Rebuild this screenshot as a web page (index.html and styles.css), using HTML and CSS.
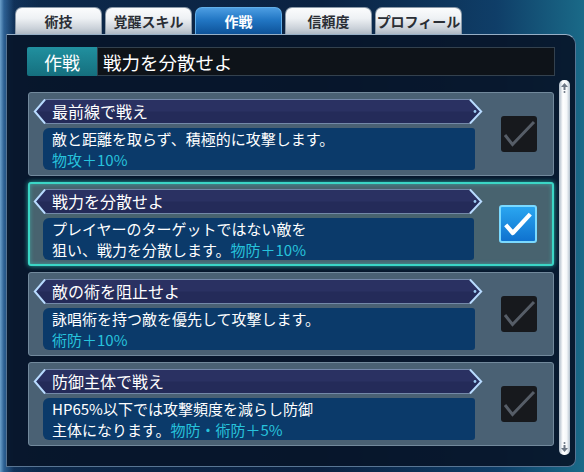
FILE: index.html
```html
<!DOCTYPE html>
<html lang="ja">
<head>
<meta charset="utf-8">
<title>作戦</title>
<link rel="stylesheet" href="styles.css">
</head>
<body>
<div class="screen">
  <nav class="tabs">
    <div class="tab">術技</div>
    <div class="tab">覚醒スキル</div>
    <div class="tab active">作戦</div>
    <div class="tab">信頼度</div>
    <div class="tab">プロフィール</div>
  </nav>
  <section class="panel">
    <header class="current">
      <div class="current-label">作戦</div>
      <div class="current-value">戦力を分散せよ</div>
    </header>
    <div class="panel-body">
      <ul class="tactics">
        <li class="tactic">
          <div class="tactic-main">
            <div class="ribbon">
              <svg class="ribbon-bg" viewBox="0 0 450 25" width="450" height="25"><polygon points="11,0.5 438,0.5 449,12.5 438,24.5 11,24.5 1,12.5" fill="#242b59"/><polygon points="11,0.5 438,0.5 449,12.5 1,12.5" fill="#2e3669" opacity="0.6"/><line x1="11" y1="0.5" x2="438" y2="0.5" stroke="#8ea6c6" stroke-width="1" opacity="0.7"/><line x1="11" y1="24.5" x2="438" y2="24.5" stroke="#8ea6c6" stroke-width="1" opacity="0.7"/><polyline points="12,0.5 1.8,12.5 12,24.5" fill="none" stroke="#b9dcff" stroke-width="2"/><polyline points="437,0.5 448.2,12.5 437,24.5" fill="none" stroke="#b9dcff" stroke-width="2"/><circle cx="442" cy="12.5" r="1.4" fill="#9ccaf0"/></svg>
              <span class="ribbon-title">最前線で戦え</span>
            </div>
            <p class="desc">敵と距離を取らず、積極的に攻撃します。<br><span class="bonus">物攻＋10%</span></p>
          </div>
          <div class="check"><svg viewBox="0 0 36 36" width="36" height="36"><polyline points="4,19 11.5,28.5 33,6" fill="none" stroke="#565d67" stroke-width="3"/></svg></div>
        </li>
        <li class="tactic selected">
          <div class="tactic-main">
            <div class="ribbon">
              <svg class="ribbon-bg" viewBox="0 0 450 25" width="450" height="25"><polygon points="11,0.5 438,0.5 449,12.5 438,24.5 11,24.5 1,12.5" fill="#242b59"/><polygon points="11,0.5 438,0.5 449,12.5 1,12.5" fill="#2e3669" opacity="0.6"/><line x1="11" y1="0.5" x2="438" y2="0.5" stroke="#8ea6c6" stroke-width="1" opacity="0.7"/><line x1="11" y1="24.5" x2="438" y2="24.5" stroke="#8ea6c6" stroke-width="1" opacity="0.7"/><polyline points="12,0.5 1.8,12.5 12,24.5" fill="none" stroke="#b9dcff" stroke-width="2"/><polyline points="437,0.5 448.2,12.5 437,24.5" fill="none" stroke="#b9dcff" stroke-width="2"/><circle cx="442" cy="12.5" r="1.4" fill="#9ccaf0"/></svg>
              <span class="ribbon-title">戦力を分散せよ</span>
            </div>
            <p class="desc">プレイヤーのターゲットではない敵を<br>狙い、戦力を分散します。<span class="bonus">物防＋10%</span></p>
          </div>
          <div class="check checked"><svg viewBox="0 0 36 36" width="36" height="36"><polyline points="5,19 12.5,27.5 31,7.5" fill="none" stroke="#ffffff" stroke-width="4.5" stroke-linejoin="round"/></svg></div>
        </li>
        <li class="tactic">
          <div class="tactic-main">
            <div class="ribbon">
              <svg class="ribbon-bg" viewBox="0 0 450 25" width="450" height="25"><polygon points="11,0.5 438,0.5 449,12.5 438,24.5 11,24.5 1,12.5" fill="#242b59"/><polygon points="11,0.5 438,0.5 449,12.5 1,12.5" fill="#2e3669" opacity="0.6"/><line x1="11" y1="0.5" x2="438" y2="0.5" stroke="#8ea6c6" stroke-width="1" opacity="0.7"/><line x1="11" y1="24.5" x2="438" y2="24.5" stroke="#8ea6c6" stroke-width="1" opacity="0.7"/><polyline points="12,0.5 1.8,12.5 12,24.5" fill="none" stroke="#b9dcff" stroke-width="2"/><polyline points="437,0.5 448.2,12.5 437,24.5" fill="none" stroke="#b9dcff" stroke-width="2"/><circle cx="442" cy="12.5" r="1.4" fill="#9ccaf0"/></svg>
              <span class="ribbon-title">敵の術を阻止せよ</span>
            </div>
            <p class="desc">詠唱術を持つ敵を優先して攻撃します。<br><span class="bonus">術防＋10%</span></p>
          </div>
          <div class="check"><svg viewBox="0 0 36 36" width="36" height="36"><polyline points="4,19 11.5,28.5 33,6" fill="none" stroke="#565d67" stroke-width="3"/></svg></div>
        </li>
        <li class="tactic">
          <div class="tactic-main">
            <div class="ribbon">
              <svg class="ribbon-bg" viewBox="0 0 450 25" width="450" height="25"><polygon points="11,0.5 438,0.5 449,12.5 438,24.5 11,24.5 1,12.5" fill="#242b59"/><polygon points="11,0.5 438,0.5 449,12.5 1,12.5" fill="#2e3669" opacity="0.6"/><line x1="11" y1="0.5" x2="438" y2="0.5" stroke="#8ea6c6" stroke-width="1" opacity="0.7"/><line x1="11" y1="24.5" x2="438" y2="24.5" stroke="#8ea6c6" stroke-width="1" opacity="0.7"/><polyline points="12,0.5 1.8,12.5 12,24.5" fill="none" stroke="#b9dcff" stroke-width="2"/><polyline points="437,0.5 448.2,12.5 437,24.5" fill="none" stroke="#b9dcff" stroke-width="2"/><circle cx="442" cy="12.5" r="1.4" fill="#9ccaf0"/></svg>
              <span class="ribbon-title">防御主体で戦え</span>
            </div>
            <p class="desc">HP65%以下では攻撃頻度を減らし防御<br>主体になります。<span class="bonus">物防・術防＋5%</span></p>
          </div>
          <div class="check"><svg viewBox="0 0 36 36" width="36" height="36"><polyline points="4,19 11.5,28.5 33,6" fill="none" stroke="#565d67" stroke-width="3"/></svg></div>
        </li>
      </ul>
      <div class="scrollbar">
        <svg class="scroll-arrow" viewBox="0 0 7 10" width="7" height="10"><polygon points="3.5,0 7,4 0,4" fill="#6c7784"/><rect x="2.5" y="4" width="2" height="3" fill="#6c7784"/><circle cx="3.5" cy="9" r="1" fill="#6c7784"/></svg>
        <svg class="scroll-arrow" viewBox="0 0 7 10" width="7" height="10"><circle cx="3.5" cy="1" r="1" fill="#6c7784"/><rect x="2.5" y="3" width="2" height="3" fill="#6c7784"/><polygon points="3.5,10 7,6 0,6" fill="#6c7784"/></svg>
      </div>
    </div>
  </section>
</div>
</body>
</html>
```

FILE: styles.css
```css
html, body {
  margin: 0;
  padding: 0;
}

body {
  width: 584px;
  height: 472px;
  overflow: hidden;
  font-family: "Noto Sans CJK JP", "Noto Sans", sans-serif;
  background:
    linear-gradient(90deg, rgba(140, 200, 245, 0.75) 0, rgba(70, 140, 205, 0.55) 4px, rgba(30, 80, 140, 0.2) 14px, rgba(20, 60, 110, 0) 40px),
    linear-gradient(90deg, #0d2a4c 0, #0b2242 55%, #0f3e68 85%, #1a6a88 100%);
}

.screen {
  width: 584px;
  height: 472px;
}

.tabs {
  display: flex;
  gap: 3px;
  padding: 7px 0 0 15px;
  height: 27px;
}

.tab {
  width: 87px;
  height: 27px;
  box-sizing: border-box;
  border: 1px solid #8b99a8;
  border-bottom: none;
  border-radius: 7px 7px 0 0;
  background: linear-gradient(#fbfcfd 0, #eef1f4 40%, #c9d0d8 80%, #aeb8c3 100%);
  color: #2a2e35;
  font-size: 14px;
  font-weight: 700;
  display: flex;
  align-items: center;
  justify-content: center;
}

.tab.active {
  background: linear-gradient(#4c9de2 0, #2277c4 45%, #0d5299 100%);
  border-color: #62aee8;
  color: #ffffff;
}

.panel {
  margin: 0 8px 0 6px;
  height: 433px;
  box-sizing: border-box;
  border: 1px solid #587593;
  border-top-color: #97afc6;
  border-radius: 0 10px 8px 0;
  background: rgba(8, 22, 42, 0.93);
  padding: 12px 5px 0 20px;
}

.current {
  display: flex;
  width: 528px;
  height: 29px;
}

.current-label {
  width: 70px;
  background: linear-gradient(#21909f, #156f7e);
  color: #ffffff;
  font-size: 18px;
  display: flex;
  align-items: center;
  justify-content: center;
  border-radius: 2px 0 0 2px;
}

.current-value {
  flex: 1;
  box-sizing: border-box;
  background: #0e1319;
  border: 1px solid #33414e;
  color: #ffffff;
  font-size: 18.5px;
  padding-left: 5px;
  display: flex;
  align-items: center;
}

.panel-body {
  display: flex;
  gap: 5px;
  margin-top: 4px;
}

.tactics {
  list-style: none;
  margin: 0;
  padding: 12px 0 0 1px;
  width: 526px;
  display: flex;
  flex-direction: column;
  gap: 6px;
}

.tactic {
  height: 84px;
  box-sizing: border-box;
  background: #4a6174;
  border: 1px solid #72899c;
  border-radius: 3px;
  display: flex;
  align-items: center;
  padding: 0 16px 0 4px;
}

.tactic.selected {
  border: 2px solid #3bd6c6;
  padding: 0 15px 0 3px;
  background: #48636f;
  box-shadow: 0 0 5px rgba(50, 210, 195, 0.8), inset 0 0 4px rgba(60, 220, 200, 0.5);
}

.tactic-main {
  width: 450px;
  display: flex;
  flex-direction: column;
  gap: 4px;
}

.ribbon {
  position: relative;
  height: 25px;
  line-height: 25px;
  padding-left: 19px;
  color: #ffffff;
  font-size: 16px;
}

.ribbon-bg {
  position: absolute;
  left: 0;
  top: 0;
}

.ribbon-title {
  position: relative;
}

.desc {
  margin: 0 8px 0 10px;
  height: 42px;
  background: #0b3a6a;
  border-radius: 6px 3px 3px 6px;
  padding: 0 9px;
  color: #ffffff;
  font-size: 15px;
  line-height: 21px;
}

.bonus {
  color: #27c3dc;
}

.check {
  width: 36px;
  height: 36px;
  margin-left: 18px;
  background: #17191d;
  border-radius: 3px;
  display: flex;
}

.check.checked {
  width: 38px;
  height: 38px;
  margin-left: 17px;
  box-sizing: border-box;
  border: 2px solid #7ad9ff;
  background: linear-gradient(#2aa6f0, #0f72cf);
  align-items: center;
  justify-content: center;
}

.check.checked svg {
  width: 34px;
  height: 34px;
}

.scrollbar {
  width: 11px;
  height: 375px;
  box-sizing: border-box;
  border-radius: 5px;
  background: linear-gradient(90deg, #aab8c6 0, #ffffff 35%, #f4f7f9 70%, #b6c3cf 100%);
  display: flex;
  flex-direction: column;
  justify-content: space-between;
  align-items: center;
  padding: 3px 0;
}
```
